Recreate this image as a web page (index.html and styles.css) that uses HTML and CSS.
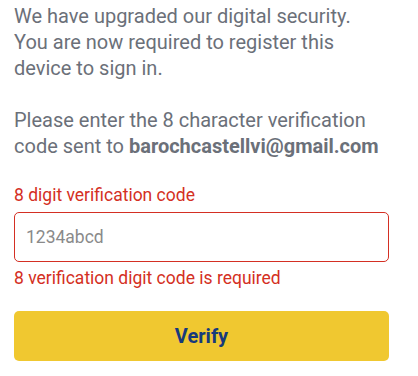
FILE: index.html
```html
<!DOCTYPE html>
<html>
<head>
<meta charset="utf-8">
<link rel="stylesheet" href="styles.css">
</head>
<body>
<main class="panel">
  <p class="intro">We have upgraded our digital security. You are now required to register this device to sign in.</p>
  <p class="intro intro-last">Please enter the 8 character verification code sent to <strong>barochcastellvi@gmail.com</strong></p>
  <form class="form">
    <label class="label" for="code">8 digit verification code</label>
    <input class="input" id="code" type="text" placeholder="1234abcd">
    <div class="error">8 verification digit code is required</div>
    <button class="btn" type="button">Verify</button>
  </form>
</main>
</body>
</html>
```
FILE: styles.css
```css
html, body {
  margin: 0;
  padding: 0;
  background: #ffffff;
}
.panel {
  width: 375px;
  padding: 3px 0 0 14px;
  font-family: Roboto, "Liberation Sans", sans-serif;
  color: #6b7079;
}
.intro {
  margin: 0 0 26px 0;
  font-size: 20px;
  line-height: 26px;
}
.intro-last {
  margin-bottom: 24px;
}
.intro strong {
  font-weight: 700;
}
.form {
  display: flex;
  flex-direction: column;
}
.label {
  color: #d42f23;
  font-size: 17.5px;
  line-height: 24px;
  margin-bottom: 5px;
}
.input {
  box-sizing: border-box;
  height: 50px;
  width: 100%;
  border: 1px solid #d42f23;
  border-radius: 5px;
  padding: 0 11px;
  font-family: Roboto, "Liberation Sans", sans-serif;
  font-size: 17.5px;
  color: #333;
  outline: none;
}
.input::placeholder {
  color: #8a8a8a;
}
.error {
  color: #d42f23;
  font-size: 17.5px;
  line-height: 24px;
  margin-top: 4px;
}
.btn {
  margin-top: 21px;
  height: 50px;
  width: 100%;
  border: none;
  border-radius: 5px;
  background: #f0c830;
  color: #173a7c;
  font-family: Roboto, "Liberation Sans", sans-serif;
  font-size: 20px;
  font-weight: 700;
  cursor: pointer;
}
```
